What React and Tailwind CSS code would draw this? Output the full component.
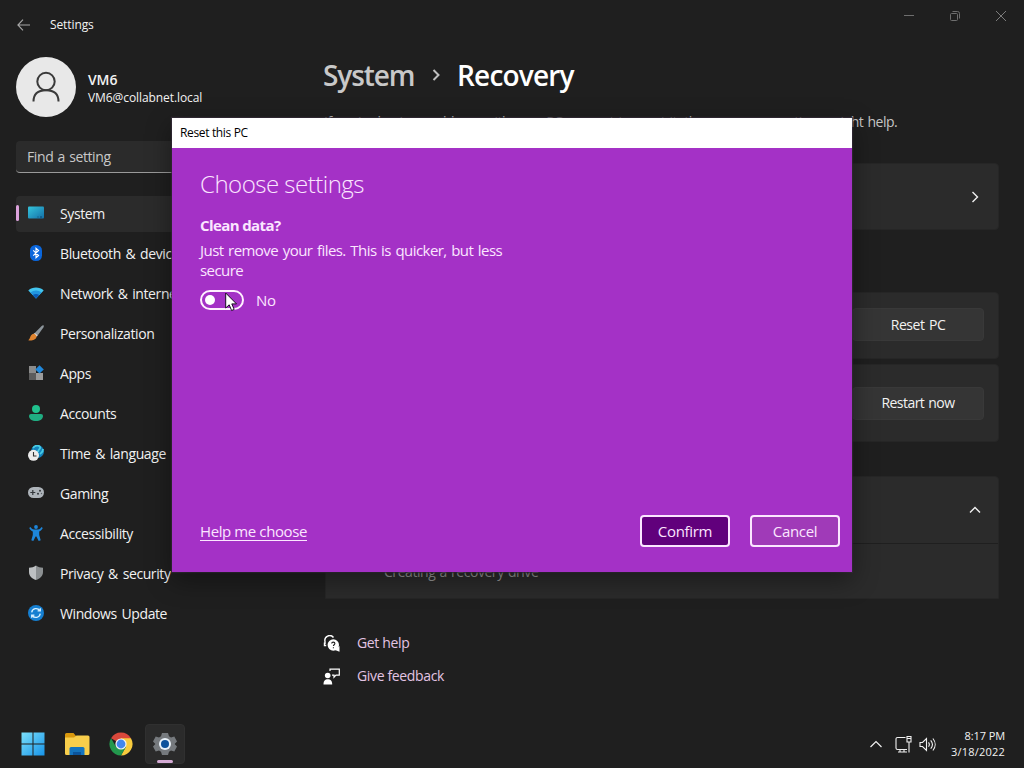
import { clsx } from 'clsx';

const SystemIcon = () => (
    <svg width="16" height="16" viewBox="0 0 16 16">
        <defs>
            <linearGradient id="sys" x1="0" y1="0" x2="1" y2="1">
                <stop offset="0" stopColor="#35c5dc" />
                <stop offset="1" stopColor="#1470a8" />
            </linearGradient>
        </defs>
        <rect x="0" y="1.500" width="16" height="12" rx="1" fill="url(#sys)" />
        <path d="M9.500 12h1M12 12h2" stroke="#0b4770" strokeWidth="1" />
    </svg>
);

const BluetoothIcon = () => (
    <svg width="16" height="16" viewBox="0 0 16 16">
        <rect x="2" y="0" width="12" height="16" rx="5.500" fill="#0a66dc" />
        <path d="M5.200 5.300l5.400 5.200L8 12.700V3.300l2.600 2.200-5.400 5.200" fill="none" stroke="#fff" strokeWidth="1.100" />
    </svg>
);

const WifiIcon = () => (
    <svg width="16" height="16" viewBox="0 0 16 16">
        <path d="M0.300 5.400C4.500 1.600 11.500 1.600 15.700 5.400L8 13.500z" fill="#43c5ef" />
        <path d="M2.500 7.600C5.500 4.900 10.500 4.900 13.500 7.600L8 13.500z" fill="#2196df" />
        <path d="M4.800 10C6.600 8.500 9.400 8.500 11.200 10L8 13.500z" fill="#0b5bb5" />
    </svg>
);

const BrushIcon = () => (
    <svg width="16" height="16" viewBox="0 0 16 16">
        <path d="M15.500 0.300C16 .8 15.900 1.500 15.400 2.400L9.800 10.300 7 7.800 13.400 1.200C14.200.4 15 0 15.500.3z" fill="#8d969c" />
        <path d="M7 7.800L9.800 10.300 8.700 11.800 5.600 9z" fill="#d8d8d8" />
        <path d="M5.400 8.700C7 8.800 8.600 10.300 8.600 11.700 8 14.800 3.500 16 0.300 15.200 2.600 13.800 1.800 9.600 5.400 8.700z" fill="#df8430" />
    </svg>
);

const AppsIcon = () => (
    <svg width="16" height="16" viewBox="0 0 16 16">
        <rect x="1" y="1" width="7" height="7" fill="#8b8b8b" />
        <rect x="1" y="8" width="7" height="7" fill="#5c5c5c" />
        <rect x="8" y="8" width="7" height="7" fill="#9b9b9b" />
        <path d="M11.500 0.200l4.300 4.200-4.300 4.200-4.200-4.200z" fill="#2088dc" />
    </svg>
);

const AccountsIcon = () => (
    <svg width="16" height="16" viewBox="0 0 16 16">
        <circle cx="8" cy="4" r="4" fill="#20c18d" />
        <path d="M3 9h10a2 2 0 0 1 2 2c0 3-3 5-7 5s-7-2-7-5a2 2 0 0 1 2-2z" fill="#20ad82" />
    </svg>
);

const TimeIcon = () => (
    <svg width="16" height="16" viewBox="0 0 16 16">
        <circle cx="9.500" cy="6.500" r="6.500" fill="#1584bd" />
        <path d="M5 3c2-3 6-3 7-1s-2 2-2 5M12 9c2-2 3-2 3-5" stroke="#48cce4" strokeWidth="1.800" fill="none" />
        <circle cx="5.500" cy="10.300" r="5.500" fill="#ececec" />
        <path d="M5.500 7v4h3" stroke="#333" strokeWidth="1.100" fill="none" />
    </svg>
);

const GamingIcon = () => (
    <svg width="16" height="16" viewBox="0 0 16 16">
        <rect x="0" y="2" width="16" height="11" rx="5.500" fill="#aeb4ba" />
        <path d="M4.800 5v5M2.300 7.500h5" stroke="#33373b" strokeWidth="1.200" />
        <circle cx="12" cy="5.800" r="1" fill="#33373b" />
        <circle cx="10" cy="8.800" r="1" fill="#33373b" />
        <circle cx="13.500" cy="8.500" r="0.700" fill="#5b6167" />
    </svg>
);

const AccessibilityIcon = () => (
    <svg width="16" height="16" viewBox="0 0 16 16">
        <circle cx="8" cy="2" r="1.900" fill="#1d86db" />
        <path d="M2.500 2C4 4.500 5.500 4.600 8 4.600s4-.1 5.500-2.600l1.300.9c-1 2-2.200 3-3.600 3.500V10l1.500 5.300-2 .7L8.400 11.500h-.8L5.300 16l-2-.7L4.800 10V6.400C3.400 5.900 2.200 4.900 1.200 2.900z" fill="#1d86db" />
    </svg>
);

const ShieldIcon = () => (
    <svg width="16" height="16" viewBox="0 0 16 16">
        <path d="M8 .5C10 2 12.500 2.700 15 2.700V7c0 4-3 6.700-7 8z" fill="#8c9092" />
        <path d="M8 .5C6 2 3.500 2.700 1 2.700V7c0 4 3 6.700 7 8z" fill="#bdc0c2" />
    </svg>
);

const UpdateIcon = () => (
    <svg width="16" height="16" viewBox="0 0 16 16">
        <circle cx="8" cy="8" r="8" fill="#157fd1" />
        <path d="M3.700 7.300A4.500 4.500 0 0 1 11.800 5.500M12.300 3.200v2.700H9.600M12.300 8.700A4.500 4.500 0 0 1 4.200 10.500M3.700 12.800v-2.700h2.700" stroke="#d5efff" strokeWidth="1.300" fill="none" />
    </svg>
);

const navItems = [
    { label: 'System', icon: SystemIcon, active: true },
    { label: 'Bluetooth & devices', icon: BluetoothIcon },
    { label: 'Network & internet', icon: WifiIcon },
    { label: 'Personalization', icon: BrushIcon },
    { label: 'Apps', icon: AppsIcon },
    { label: 'Accounts', icon: AccountsIcon },
    { label: 'Time & language', icon: TimeIcon },
    { label: 'Gaming', icon: GamingIcon },
    { label: 'Accessibility', icon: AccessibilityIcon },
    { label: 'Privacy & security', icon: ShieldIcon },
    { label: 'Windows Update', icon: UpdateIcon },
];

function TitleBar() {
    return (
        <header className="flex h-[49px] items-start justify-between">
            <div className="flex h-full items-center gap-[20px] pl-[17px]">
                <svg width="13" height="12" viewBox="0 0 13 12" fill="none" stroke="#a8a8a8" strokeWidth="1.100">
                    <path d="M6 0.700L0.900 6 6 11.300M1 6h12" />
                </svg>
                <span className="text-xs tracking-[-0.1px]">Settings</span>
            </div>
            <div className="flex h-8 items-center gap-[36px] pr-[18px]">
                <svg width="10" height="10" stroke="#6e6e6e"><path d="M0 4.500h10" /></svg>
                <svg width="10" height="10" fill="none" stroke="#6e6e6e">
                    <rect x="0.500" y="2.500" width="7" height="7" rx="1" />
                    <path d="M2.500 0.500h5a2 2 0 0 1 2 2v5" />
                </svg>
                <svg width="10" height="10" stroke="#7c7c7c"><path d="M0 0l10 10M10 0L0 10" /></svg>
            </div>
        </header>
    );
}

function Sidebar() {
    return (
        <aside className="w-[310px] shrink-0 pl-4 pt-2">
            <div className="flex items-center gap-3">
                <div className="flex h-[60px] w-[60px] items-center justify-center rounded-full bg-[#e8e8e8]">
                    <svg width="28" height="32" viewBox="0 0 28 32" fill="none" stroke="#3a3a3a" strokeWidth="2">
                        <circle cx="14" cy="10.500" r="8.700" />
                        <path d="M1.500 30.500C1.500 23 6 19.200 14 19.200S26.500 23 26.500 30.500" />
                    </svg>
                </div>
                <div className="pt-[1px]">
                    <p className="text-sm font-semibold leading-5 tracking-[-0.1px]">VM6</p>
                    <p className="text-xs leading-4 tracking-[-0.08px]">VM6@collabnet.local</p>
                </div>
            </div>
            <div className="mt-6 flex h-8 w-[278px] items-center rounded border-b border-[#9a9a9a] bg-[#2b2b2b] pl-[11px] text-sm tracking-[-0.4px] text-[#c8c8c8] [word-spacing:1px]">
                Find a setting
            </div>
            <nav className="mt-[23px] flex w-[278px] flex-col gap-1">
                {navItems.map(({ label, icon: Icon, active }) => (
                    <div key={label} className={clsx('flex h-9 items-center rounded', active && 'bg-[#2b2b2b]')}>
                        <span className={clsx('mb-[2px] h-4 w-[3px] rounded-full', active && 'bg-[#dca2dc]')} />
                        <span className="mb-[2px] ml-[9px]"><Icon /></span>
                        <span className="ml-4 whitespace-nowrap text-sm tracking-[-0.4px] [word-spacing:1.5px]">{label}</span>
                    </div>
                ))}
            </nav>
        </aside>
    );
}

function Main() {
    return (
        <main className="w-[689px] pl-[15px]">
            <div className="flex h-[52px] items-center text-[28px] font-semibold">
                <h1 className="-ml-[2px] w-[109px] tracking-[-1.1px] text-[#c8c8c8]">System</h1>
                <svg width="8" height="12" viewBox="0 0 8 12" fill="none" stroke="#c0c0c0" strokeWidth="2">
                    <path d="M1.500 1l5 5-5 5" />
                </svg>
                <h1 className="ml-[17px] tracking-[-0.8px] text-white">Recovery</h1>
            </div>
            <p className="-ml-px mt-[11px] whitespace-nowrap text-sm tracking-[-0.5px] text-[#c5c5c5] [word-spacing:1px]">
                If you're having problems with your PC or want to reset it, these recovery options might help.
            </p>
            <section className="mt-[31px] flex h-[67px] items-center justify-end rounded border border-[#262626] bg-[#2b2b2b] pr-[19px]">
                <svg width="8" height="12" viewBox="0 0 8 12" fill="none" stroke="#f0f0f0" strokeWidth="1.400">
                    <path d="M1.500 1l5 5-5 5" />
                </svg>
            </section>
            <section className="mt-[62px] flex h-[67px] items-center justify-end rounded border border-[#262626] bg-[#2b2b2b] pb-[2px] pr-[14px]">
                <button className="h-[33px] w-[132px] rounded border border-[#393939] bg-[#353535] text-sm tracking-[-0.4px] [word-spacing:1px]">Reset PC</button>
            </section>
            <section className="mt-[5px] flex h-[78px] items-center justify-end rounded border border-[#262626] bg-[#2b2b2b] pr-[14px]">
                <button className="h-[33px] w-[132px] rounded border border-[#393939] bg-[#353535] text-sm tracking-[-0.55px] [word-spacing:1px]">Restart now</button>
            </section>
            <section className="mt-[34px] h-[123px] rounded-t border border-[#262626] bg-[#2b2b2b]">
                <div className="flex h-[67px] items-center justify-end border-b border-[#1f1f1f] pr-[17px]">
                    <svg width="12" height="8" viewBox="0 0 12 8" fill="none" stroke="#f0f0f0" strokeWidth="1.400">
                        <path d="M1 6.500l5-5 5 5" />
                    </svg>
                </div>
                <p className="pl-[58px] pt-[18px] text-sm leading-5 tracking-[-0.45px] text-[#969696] [word-spacing:1px]">Creating a recovery drive</p>
            </section>
            <div className="-ml-[2px] mt-[34px] flex flex-col gap-[13px] text-sm leading-5 tracking-[-0.35px] text-[#e3c4e3]">
                <div className="flex items-center gap-[17px]">
                    <svg width="17" height="17" viewBox="0 0 17 17">
                        <path d="M2 9V6.500A4.800 4.800 0 0 1 10.500 2.500M1.500 7.500v3h1.700" fill="none" stroke="#fff" strokeWidth="1.400" />
                        <circle cx="10.300" cy="10" r="5.700" fill="#fff" />
                        <path d="M12 15l4.500 1.700V11z" fill="#fff" />
                        <path d="M8.700 8.600c0-2 3.200-2 3.200 0 0 1.200-1.500 1.200-1.500 2.500M10.400 12.300v1" stroke="#1f1f1f" strokeWidth="1.100" fill="none" />
                    </svg>
                    <span>Get help</span>
                </div>
                <div className="flex items-center gap-[17px]">
                    <svg width="17" height="17" viewBox="0 0 17 17">
                        <circle cx="4.700" cy="7.500" r="2.800" fill="#fff" />
                        <path d="M0.500 16.500c0-3.700 1.500-5.200 4.300-5.200s4.400 1.500 4.400 5.200z" fill="#fff" />
                        <path d="M7 3V1.200h9.300v6h-3.300l-2 2v-2H9" fill="none" stroke="#fff" strokeWidth="1.200" />
                    </svg>
                    <span>Give feedback</span>
                </div>
            </div>
        </main>
    );
}

function ResetDialog() {
    return (
        <div className="absolute left-[172px] top-[118px] flex h-[454px] w-[680px] flex-col bg-[#a431c6] text-[#fbe6ff] shadow-[0_8px_24px_rgba(0,0,0,0.4),0_0_1px_1px_rgba(60,50,65,0.7)]">
            <div className="flex h-[30px] shrink-0 items-center bg-white pl-2 text-xs tracking-[-0.35px] text-black">Reset this PC</div>
            <div className="flex flex-1 flex-col pl-7">
                <h2 className="mt-5 text-2xl font-light leading-8 tracking-[-0.5px]">Choose settings</h2>
                <p className="mt-[15px] text-[15px] font-bold leading-5 tracking-[-0.6px]">Clean data?</p>
                <p className="mt-[5px] w-[320px] text-[15px] leading-5 tracking-[-0.55px] [word-spacing:1.2px]">
                    Just remove your files. This is quicker, but less<br />secure
                </p>
                <div className="mt-[10px] flex items-center gap-3">
                    <div className="flex h-5 w-11 items-center rounded-full border-2 border-[#fff0ff] pl-[3px]">
                        <span className="h-[10px] w-[10px] rounded-full bg-white" />
                    </div>
                    <span className="text-[15px] leading-5 tracking-[-0.3px]">No</span>
                </div>
                <div className="mb-[25px] mr-3 mt-auto flex items-center">
                    <a className="mr-auto border-b border-[#fbe6ff] pt-[2px] text-[15px] leading-[17px] tracking-[-0.4px]">Help me choose</a>
                    <button className="h-8 w-[90px] rounded border-2 border-[#fbe6ff] bg-[#61007c] text-[15px] tracking-[-0.3px]">Confirm</button>
                    <button className="ml-5 h-8 w-[90px] rounded border-2 border-[#fbe6ff] bg-[#a03ab8] text-[15px] tracking-[-0.35px]">Cancel</button>
                </div>
            </div>
            {/* Mouse pointer resting on the toggle */}
            <svg className="absolute left-[53px] top-[174px]" width="13" height="20" viewBox="0 0 13 20">
                <path d="M0.700 1v15l3.500-3.200 2.400 5.700 2.600-1.100-2.400-5.500h4.700z" fill="#fff" stroke="#1a0a22" strokeWidth="1" />
            </svg>
        </div>
    );
}

function Taskbar() {
    return (
        <footer className="flex h-12 items-center justify-between bg-[#1f1f1f] pl-[13px] pr-[19px]">
            <div className="flex h-10 gap-1">
                <div className="flex w-10 items-center justify-center">
                    <svg width="24" height="24" viewBox="0 0 24 24">
                        <defs>
                            <linearGradient id="win" x1="0" y1="0" x2="1" y2="1">
                                <stop offset="0" stopColor="#7be0fb" />
                                <stop offset="1" stopColor="#1793e8" />
                            </linearGradient>
                        </defs>
                        <path d="M0.500 0.500h11v11H.5zM12.500.5h11v11h-11zM.5 12.500h11v11H.5zM12.500 12.500h11v11h-11z" fill="url(#win)" />
                    </svg>
                </div>
                <div className="flex w-10 items-center justify-center">
                    <svg width="26" height="24" viewBox="0 0 26 24">
                        <path d="M1 2.500a1.500 1.500 0 0 1 1.500-1.500h7l2.500 3v4H1z" fill="#d9980d" />
                        <path d="M1 5.500h9l2.500-2H24a1.500 1.500 0 0 1 1.500 1.500v16.500a1.500 1.500 0 0 1-1.500 1.500H2.500A1.500 1.500 0 0 1 1 21.500z" fill="#f8ce4b" />
                        <path d="M5.500 23v-6.500A1.500 1.500 0 0 1 7 15h12a1.500 1.500 0 0 1 1.500 1.500V23z" fill="#1474be" />
                        <path d="M9 23v-3h8v3z" fill="#0b549c" />
                    </svg>
                </div>
                <div className="flex w-10 items-center justify-center">
                    <svg width="24" height="24" viewBox="0 0 24 24">
                        <path d="M12 12L2.040 6.250A11.500 11.500 0 0 1 21.960 6.250z" fill="#d9483b" />
                        <path d="M12 12V6.250H21.960A11.500 11.500 0 0 1 12 23.500L16.900 14.700z" fill="#f8cb3d" />
                        <path d="M2.040 6.250A11.500 11.500 0 0 0 12 23.500L17 14.800 12 12 7 14.800z" fill="#23984d" />
                        <circle cx="12" cy="12" r="5.600" fill="#f3f3f3" />
                        <circle cx="12" cy="12" r="4.400" fill="#4287ee" />
                    </svg>
                </div>
                <div className="relative flex w-10 items-center justify-center rounded border border-[#303030] bg-[#2b2b2b]">
                    <svg width="24" height="24" viewBox="0 0 24 24">
                        <path d="M9 1h6l1 3.300 2 1.100 3.300-.8 2.700 5-2.400 2.400 2.400 2.400-2.700 5-3.300-.8-2 1.100-1 3.300H9l-1-3.300-2-1.100-3.300.8-2.700-5L2.400 12 0 9.600l2.700-5 3.300.8 2-1.100z" fill="#767a7e" />
                        <circle cx="12" cy="12" r="6" fill="#e9f2fa" />
                        <circle cx="12" cy="12" r="4" fill="#0d529c" />
                    </svg>
                    <span className="absolute bottom-0 h-[3px] w-4 rounded-full bg-[#d5abd5]" />
                </div>
            </div>
            <div className="flex items-center">
                <svg width="12" height="8" viewBox="0 0 12 8" fill="none" stroke="#f0f0f0" strokeWidth="1.200">
                    <path d="M0.500 7l5.500-5.500L11.500 7" />
                </svg>
                <svg className="ml-[13px]" width="17" height="17" viewBox="0 0 17 17" fill="none" stroke="#f0f0f0" strokeWidth="1.100">
                    <path d="M10.500 1.500h-8a1.500 1.500 0 0 0-1.500 1.500v9a1.500 1.500 0 0 0 1.500 1.500h9.500M5 13.500v2.500M9 13.500v2.500M3 16h9M12 .5h4v5.500h-4zM14 6V16.500M12 2.500h4" />
                </svg>
                <svg className="ml-[7px]" width="17" height="15" viewBox="0 0 17 15" fill="none" stroke="#f0f0f0" strokeWidth="1.100">
                    <path d="M1 5.500h2.500L7.500 1.500v12L3.500 9.500H1zM9.500 5.300c1 1.300 1 3.100 0 4.400M11.700 3.300c2.100 2.500 2.100 5.900 0 8.400M13.900 1.500c3 3.600 3 8.400 0 12" />
                </svg>
                <div className="ml-[15px] text-right text-[11px] leading-4">
                    <p className="tracking-[-0.1px]">8:17 PM</p>
                    <p className="tracking-[0.2px]">3/18/2022</p>
                </div>
            </div>
        </footer>
    );
}

export default function App() {
    return (
        <div className="relative flex h-[768px] w-[1024px] flex-col overflow-hidden bg-[#1f1f1f] font-['Open_Sans','Noto_Sans',sans-serif] text-[#f2f2f2]">
            <TitleBar />
            <div className="flex h-[671px]">
                <Sidebar />
                <Main />
            </div>
            <Taskbar />
            <ResetDialog />
        </div>
    );
}
